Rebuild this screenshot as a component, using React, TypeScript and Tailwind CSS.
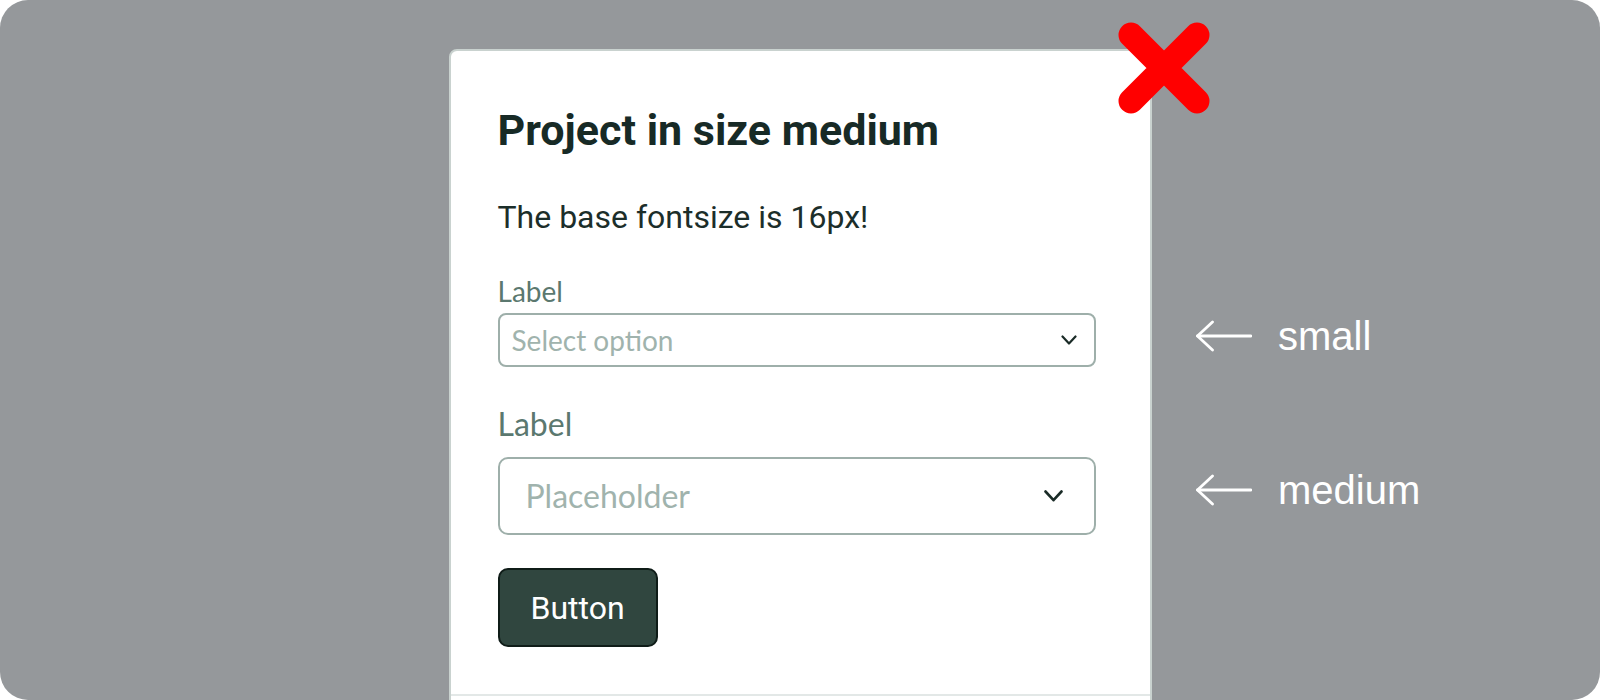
import React from 'react'

const plex = "font-['Roboto',sans-serif]"
const source = "font-['Lato',sans-serif]"

function Chevron({ big }: { big?: boolean }) {
  if (big) {
    return (
      <svg width="19" height="12" viewBox="0 0 19 12" fill="none">
        <path d="M1.5 1.5 L9.5 10.2 L17.5 1.5" stroke="#1a2b27" strokeWidth="2.6" strokeLinecap="round" strokeLinejoin="round" />
      </svg>
    )
  }
  return (
    <svg width="16" height="10" viewBox="0 0 16 10" fill="none">
      <path d="M1.5 1.5 L8 8.5 L14.5 1.5" stroke="#1a2b27" strokeWidth="2.2" strokeLinecap="round" strokeLinejoin="round" />
    </svg>
  )
}

function ArrowLeft() {
  return (
    <svg width="56" height="32" viewBox="0 0 56 32" fill="none">
      <path d="M1.5 16 H55" stroke="#fff" strokeWidth="2.8" strokeLinecap="round" />
      <path d="M16.5 2 L1.5 16 L16.5 30" stroke="#fff" strokeWidth="2.8" strokeLinecap="round" strokeLinejoin="round" />
    </svg>
  )
}

function RedCross() {
  return (
    <svg width="92" height="92" viewBox="0 0 92 92" fill="none">
      <path d="M13 13 L79 79 M79 13 L13 79" stroke="#ff0000" strokeWidth="25" strokeLinecap="round" />
    </svg>
  )
}

export default function App() {
  return (
    <div className="w-full h-[700px] bg-white">
      <div className="relative w-full h-[700px] overflow-hidden rounded-[28px] bg-[#95989b]">
        <div className="flex justify-center pt-[49px]">
          <div className="w-[703px] h-[720px] bg-white border-2 border-[#c9d2cf] rounded-t-[8px] flex flex-col">
            <div className="flex flex-col pl-[47px] pt-[54px] pb-[47px]">
              <h1 className={`${plex} text-[43px] leading-[50px] font-bold text-[#172a26]`}>
                Project in size medium
              </h1>
              <p className={`${plex} mt-[42px] text-[32px] leading-[40px] text-[#1c2e2a]`}>
                The base fontsize is 16px!
              </p>

              {/* small select */}
              <label className={`${source} mt-[37px] text-[28px] leading-[34px] text-[#5b786f]`}>Label</label>
              <div className="mt-[5px] w-[598px] h-[54px] border-2 border-[#9eafaa] rounded-[8px] flex items-center justify-between pl-[12px] pr-[17px]">
                <span className={`${source} text-[28px] leading-[34px] text-[#a0b3ad]`}>Select option</span>
                <Chevron />
              </div>

              {/* medium select */}
              <label className={`${source} mt-[38px] text-[32px] leading-[38px] text-[#5b786f]`}>Label</label>
              <div className="mt-[14px] w-[598px] h-[78px] border-2 border-[#9eafaa] rounded-[10px] flex items-center justify-between pl-[26px] pr-[31px]">
                <span className={`${source} text-[32px] leading-[38px] text-[#a0b3ad]`}>Placeholder</span>
                <Chevron big />
              </div>

              <button className={`${plex} mt-[33px] w-[160px] h-[79px] bg-[#30463f] border-2 border-[#0f1c18] rounded-[10px] text-white text-[32px] leading-[40px]`}>
                Button
              </button>
            </div>
            <div className="border-t-2 border-[#e3e8e7] h-[60px]" />
          </div>
        </div>

        {/* annotations */}
        <div className="absolute left-[1118px] top-[22px]">
          <RedCross />
        </div>
        <div className="absolute left-[1196px] top-[313px] flex items-center gap-[26px] h-[46px]">
          <ArrowLeft />
          <span className="font-['Liberation_Sans',Arial,sans-serif] text-[40px] leading-[46px] text-white">small</span>
        </div>
        <div className="absolute left-[1196px] top-[467px] flex items-center gap-[26px] h-[46px]">
          <ArrowLeft />
          <span className="font-['Liberation_Sans',Arial,sans-serif] text-[40px] leading-[46px] text-white">medium</span>
        </div>
      </div>
    </div>
  )
}
